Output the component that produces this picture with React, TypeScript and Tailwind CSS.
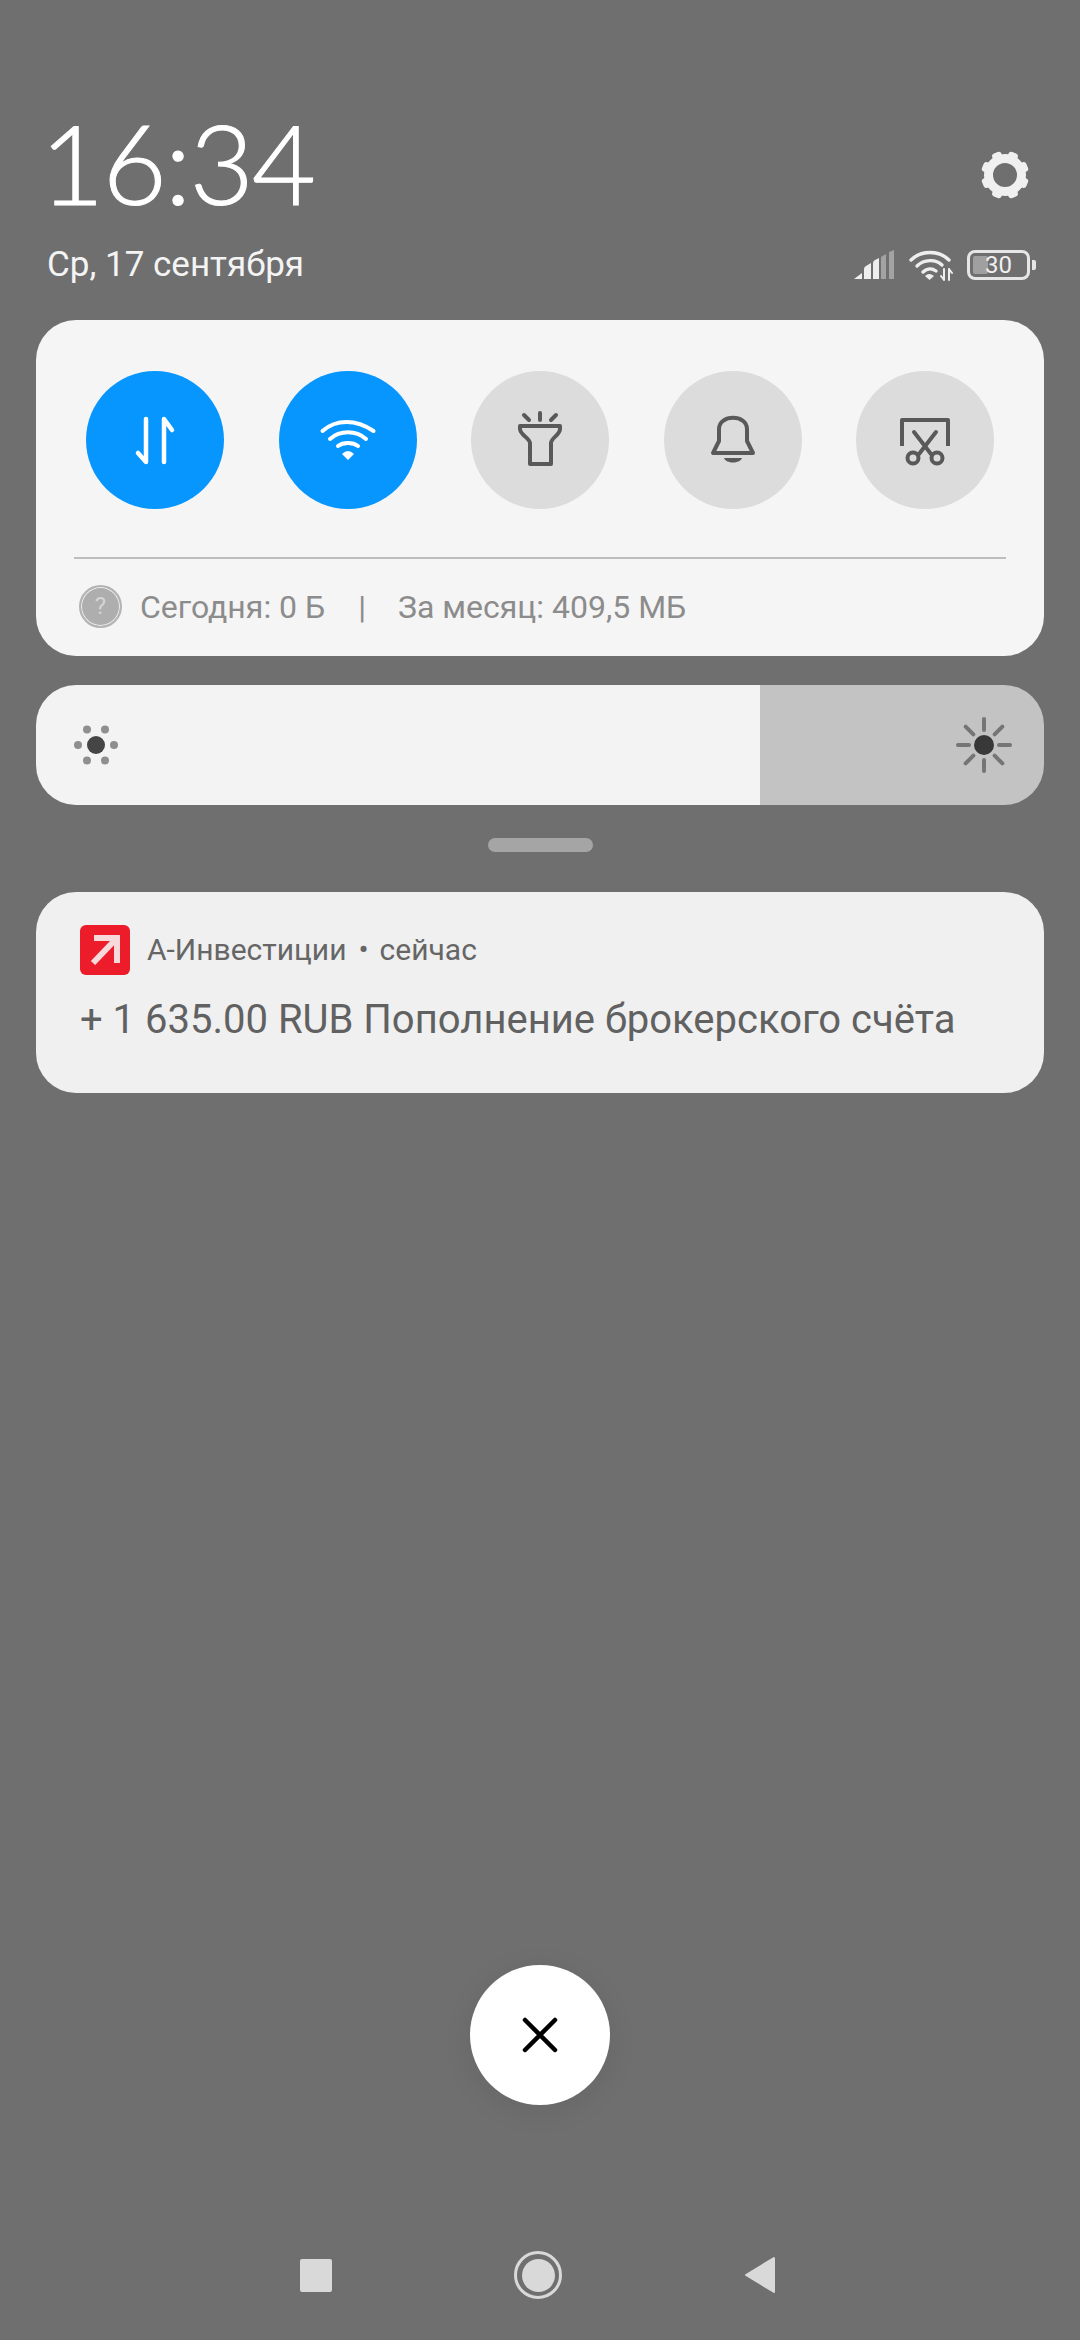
import React from "react";

function Gear() {
  const teeth = [0, 45, 90, 135, 180, 225, 270, 315];
  return (
    <svg width="52" height="52" viewBox="-26 -26 52 52">
      <circle r="16.5" fill="none" stroke="#f0f0f0" strokeWidth="9" />
      {teeth.map((a) => (
        <rect key={a} x="-5" y="-24" width="10" height="9" rx="3" fill="#f0f0f0" transform={`rotate(${a + 22.5})`} />
      ))}
    </svg>
  );
}

function Signal() {
  return (
    <svg width="42" height="32" viewBox="0 0 42 32">
      <path d="M1 30 L9 24 V30 Z" fill="#eeeeee" />
      <path d="M11 30 V20 Q11 18 13 17 L18 14 V30 Z" fill="#eeeeee" />
      <path d="M20 30 V14 Q20 12 22 11 L26 9 V30 Z" fill="#eeeeee" />
      <path d="M28 30 V8 L33 5 V30 Z" fill="#a3a3a3" />
      <path d="M36 30 V3 L41 1 V30 Z" fill="#a3a3a3" />
    </svg>
  );
}

function WifiSmall() {
  return (
    <svg width="44" height="32" viewBox="0 0 44 32" fill="none">
      <path d="M2 11 C12 1 30 1 40 11" stroke="#eeeeee" strokeWidth="3.4" strokeLinecap="round" />
      <path d="M8 17 C15 10 27 10 33 16" stroke="#eeeeee" strokeWidth="3.4" strokeLinecap="round" />
      <path d="M14 23 C18 19 23 19 27 22" stroke="#eeeeee" strokeWidth="3.4" strokeLinecap="round" />
      <path d="M16 27 Q20 23 25 27 L20.5 31 Z" fill="#eeeeee" />
      <path d="M35 20 V31 M35 31 L32 27" stroke="#eeeeee" strokeWidth="2" strokeLinecap="round" />
      <path d="M40 31 V20 M40 20 L43 24" stroke="#eeeeee" strokeWidth="2" strokeLinecap="round" />
    </svg>
  );
}

function Battery() {
  return (
    <div className="flex items-center gap-[2px]">
      <div className="relative flex h-[30px] w-[63px] items-center justify-center rounded-[8px] border-[3.5px] border-[#e6e6e6]">
        <div className="absolute bottom-[3px] left-[3px] top-[3px] w-[15px] rounded-[2px] bg-[#a0a0a0]" />
        <span className="relative font-[Roboto,sans-serif] text-[24px] leading-none text-[#f0f0f0]">30</span>
      </div>
      <div className="h-[10px] w-[4px] rounded-r-[2px] bg-[#e6e6e6]" />
    </div>
  );
}

function DataIcon() {
  return (
    <svg width="60" height="60" viewBox="0 0 60 60" fill="none" stroke="#ffffff" strokeWidth="4.5" strokeLinecap="round" strokeLinejoin="round">
      <path d="M21 9 V52 L13 43" />
      <path d="M39 52 V9 L47 20" />
    </svg>
  );
}

function WifiBig() {
  return (
    <svg width="60" height="60" viewBox="0 0 60 60" fill="none" stroke="#ffffff" strokeWidth="4" strokeLinecap="round">
      <path d="M4.5 21 C18 9 38 9 55.5 21" />
      <path d="M12 29 C22 20 38 20 48 29" />
      <path d="M20 36 C25 32 35 32 40 36" />
      <path d="M24 44 Q30 38 36 44 L30 50 Z" fill="#ffffff" stroke="none" />
    </svg>
  );
}

function Flashlight() {
  return (
    <svg width="60" height="60" viewBox="0 0 60 60" fill="none" stroke="#595959" strokeWidth="4" strokeLinecap="round" strokeLinejoin="round">
      <path d="M30 3 V10 M14 5 L19 10 M46 5 L41 10" />
      <path d="M10 16 H50 V19 C50 25 41 28 41 33 V54 H20 V33 C20 28 10 25 10 19 Z" />
    </svg>
  );
}

function Bell() {
  return (
    <svg width="60" height="60" viewBox="0 0 60 60" fill="none" stroke="#595959" strokeWidth="4" strokeLinecap="round" strokeLinejoin="round">
      <path d="M10 43 H50 L44 31 V19 C44 4 16 4 16 19 V31 Z" />
      <path d="M21 48 H39 C37 54 23 54 21 48 Z" fill="#595959" stroke="none" />
    </svg>
  );
}

function Scissors() {
  return (
    <svg width="60" height="60" viewBox="0 0 60 60" fill="none" stroke="#595959" strokeWidth="4" strokeLinecap="round" strokeLinejoin="round">
      <path d="M7 36 V10 H53 V36" strokeLinecap="butt" />
      <path d="M19 22 L36 44 M41 22 L24 44" />
      <circle cx="18" cy="48" r="5.5" />
      <circle cx="42" cy="48" r="5.5" />
    </svg>
  );
}

function SunSmall() {
  const dots: [number, number][] = [[-18, 0], [18, 0], [-9, -15.5], [9, -15.5], [-9, 15.5], [9, 15.5]];
  return (
    <svg width="48" height="48" viewBox="-24 -24 48 48">
      {dots.map(([x, y]) => (
        <circle key={`${x}${y}`} cx={x} cy={y} r="4" fill="#8f8f8f" />
      ))}
      <circle r="9" fill="#454545" />
    </svg>
  );
}

function SunBig() {
  const rays = [0, 45, 90, 135, 180, 225, 270, 315];
  return (
    <svg width="60" height="60" viewBox="-30 -30 60 60">
      {rays.map((a) => (
        <line key={a} x1="0" y1="-15" x2="0" y2="-26" stroke="#757575" strokeWidth="4" strokeLinecap="round" transform={`rotate(${a})`} />
      ))}
      <circle r="10" fill="#383838" />
    </svg>
  );
}

function Toggle({ on, children }: { on?: boolean; children: React.ReactNode }) {
  return (
    <div className={on ? "flex h-[138px] w-[138px] items-center justify-center rounded-full bg-[#0796fe]" : "flex h-[138px] w-[138px] items-center justify-center rounded-full bg-[#dcdcdc]"}>
      {children}
    </div>
  );
}

export default function App() {
  return (
    <div className="flex h-[2340px] w-[1080px] flex-col overflow-hidden bg-[#6f6f6f] font-[Roboto,sans-serif]">
      <div className="flex items-end justify-between pl-[48px] pr-[44px] pt-[93px]">
        <div className="flex flex-col">
          <div className="-ml-[8px] h-[138px] font-[Lato,sans-serif] text-[111px] font-light leading-[138px] tracking-[-2px] text-white [-webkit-text-stroke:1px_white]">16:34</div>
          <div className="-ml-[1px] mt-[9px] text-[35px] leading-[50px] text-[#f4f4f4]">Ср, 17 сентября</div>
        </div>
        <div className="flex flex-col items-end">
          <div className="mb-[48px] mr-[5px] flex">
            <Gear />
          </div>
          <div className="mb-[9px] flex items-center gap-[14px]">
            <Signal />
            <WifiSmall />
            <Battery />
          </div>
        </div>
      </div>

      <div className="mx-[36px] mt-[30px] h-[336px] rounded-[40px] bg-[#f5f5f5] px-[38px] pt-[51px]">
        <div className="flex justify-between px-[12px]">
          <Toggle on><DataIcon /></Toggle>
          <Toggle on><WifiBig /></Toggle>
          <Toggle><Flashlight /></Toggle>
          <Toggle><Bell /></Toggle>
          <Toggle><Scissors /></Toggle>
        </div>
        <div className="mt-[48px] h-[2px] bg-[#bdbdbd]" />
        <div className="mt-[25px] flex items-center pl-[5px] text-[32px] leading-[44px] text-[#8c8c8c]">
          <div className="flex h-[43px] w-[43px] items-center justify-center rounded-full border-2 border-[#b4b4b4] bg-[#aeaeae] text-[24px] leading-none text-[#d5d5d5] shadow-[inset_0_0_0_1px_#eeeeee]">?</div>
          <span className="relative top-[1px] ml-[18px]">Сегодня: 0 Б</span>
          <span className="relative top-[1px] ml-[33px]">|</span>
          <span className="relative top-[1px] ml-[32px]">За месяц: 409,5 МБ</span>
        </div>
      </div>

      <div className="mx-[36px] mt-[29px] flex h-[120px] overflow-hidden rounded-[40px]">
        <div className="flex w-[724px] items-center bg-[#f3f3f3] pl-[36px]">
          <SunSmall />
        </div>
        <div className="flex flex-1 items-center justify-end bg-[#c3c3c3] pr-[30px]">
          <SunBig />
        </div>
      </div>

      <div className="mx-auto mt-[33px] h-[14px] w-[105px] rounded-full bg-[#a5a5a5]" />

      <div className="mx-[36px] mt-[40px] h-[201px] rounded-[40px] bg-[#f0f0f0] pl-[44px] pt-[33px]">
        <div className="flex items-center">
          <div className="flex h-[50px] w-[50px] items-center justify-center rounded-[6px] bg-[#ec1c2a]">
            <svg width="34" height="34" viewBox="0 0 34 34" fill="none" stroke="#f8d9db" strokeWidth="6">
              <path d="M6 5 H29 V30" strokeLinejoin="miter" />
              <path d="M28 6 L5 30" />
            </svg>
          </div>
          <span className="ml-[17px] text-[30px] leading-[40px] text-[#666666]">А-Инвестиции</span>
          <span className="ml-[12px] text-[30px] leading-[40px] text-[#666666]">•</span>
          <span className="ml-[11px] text-[30px] leading-[40px] text-[#666666]">сейчас</span>
        </div>
        <div className="mt-[17px] text-[40px] leading-[56px] text-[#616161]">+ 1 635.00 RUB Пополнение брокерского счёта</div>
      </div>

      <div className="mt-[872px] flex justify-center">
        <div className="flex h-[140px] w-[140px] items-center justify-center rounded-full bg-white shadow-[0_6px_30px_rgba(0,0,0,0.08)]">
          <svg width="36" height="36" viewBox="0 0 36 36" fill="none" stroke="#000000" strokeWidth="4.5" strokeLinecap="round">
            <path d="M3 3 L33 33 M33 3 L3 33" />
          </svg>
        </div>
      </div>

      <div className="mt-[146px] flex items-center justify-between pl-[300px] pr-[304px]">
        <div className="h-[33px] w-[32px] rounded-[2px] bg-[#d9d9d9]" />
        <div className="flex h-[48px] w-[48px] items-center justify-center rounded-full border-[3.5px] border-[#d9d9d9]">
          <div className="h-[33px] w-[33px] rounded-full bg-[#d9d9d9]" />
        </div>
        <svg width="32" height="38" viewBox="0 0 32 38">
          <path d="M2 19 L30 2 V36 Z" fill="#d9d9d9" stroke="#d9d9d9" strokeWidth="2" strokeLinejoin="round" />
        </svg>
      </div>
    </div>
  );
}
